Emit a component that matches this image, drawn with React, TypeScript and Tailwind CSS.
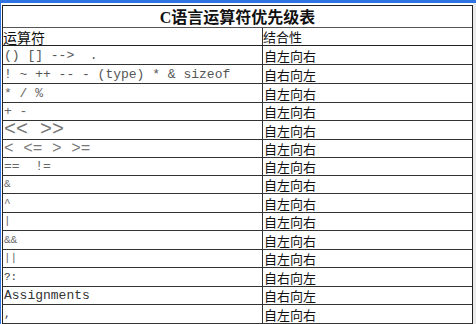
import React from "react";

const mono = { fontFamily: '"Liberation Mono", "Courier New", monospace' };

type Row = { op: string; cls: string; assoc: string; h: string };

const rows: Row[] = [
  { op: "() []\u00a0-->\u00a0\u00a0.", cls: "text-[13px] text-[#555]", assoc: "自左向右", h: "h-[19px]" },
  { op: "! ~ ++ -- - (type) * & sizeof", cls: "text-[13px] text-[#555]", assoc: "自右向左", h: "h-[19px]" },
  { op: "* / %", cls: "text-[13px] text-[#666]", assoc: "自左向右", h: "h-[19px]" },
  { op: "+ -", cls: "text-[13px] text-[#666]", assoc: "自左向右", h: "h-[18px]" },
  { op: "<< >>", cls: "text-[20px] text-[#777]", assoc: "自左向右", h: "h-[19px]" },
  { op: "< <= > >=", cls: "text-[16px] text-[#777]", assoc: "自左向右", h: "h-[18px]" },
  { op: "==\u00a0\u00a0!=", cls: "text-[13px] text-[#666]", assoc: "自左向右", h: "h-[18px]" },
  { op: "&", cls: "text-[11px] text-[#666]", assoc: "自左向右", h: "h-[18px]" },
  { op: "^", cls: "text-[11px] text-[#666]", assoc: "自左向右", h: "h-[19px]" },
  { op: "|", cls: "text-[11px] text-[#666]", assoc: "自左向右", h: "h-[18px]" },
  { op: "&&", cls: "text-[11px] text-[#666]", assoc: "自左向右", h: "h-[19px]" },
  { op: "||", cls: "text-[11px] text-[#666]", assoc: "自左向右", h: "h-[18px]" },
  { op: "?:", cls: "text-[11px] text-[#333]", assoc: "自右向左", h: "h-[19px]" },
  { op: "Assignments", cls: "text-[13px] text-[#333]", assoc: "自右向左", h: "h-[18px]" },
  { op: ",", cls: "text-[11px] text-[#333]", assoc: "自左向右", h: "h-[19px]" },
];

const cjk = { fontFamily: '"Noto Sans CJK SC", "Liberation Sans", sans-serif' };

export default function App() {
  return (
    <div className="w-[476px] h-[324px] overflow-hidden bg-white flex flex-col">
      <div className="h-[3px] bg-[#2f74e0] shrink-0" />
      <div className="flex flex-1 min-h-0">
        <div className="w-[1px] bg-[#2f74e0] shrink-0" />
        <div className="w-[1px] bg-white shrink-0" />
        <div className="flex flex-col w-[471px] shrink-0">
          <div className="h-[2px] bg-white shrink-0" />
          <div className="border-l border-r border-t border-[#222] flex flex-col flex-1">
            <div className="h-[22px] border-b border-[#555] flex items-center justify-center shrink-0">
              <span className="text-[16px] font-bold text-[#111] leading-none" style={{ fontFamily: '"Liberation Serif", "Noto Sans CJK SC", serif' }}>
                C<span style={cjk}>语言运算符优先级表</span>
              </span>
            </div>
            <div className="h-[18px] border-b border-[#222] flex shrink-0">
              <div className="w-[259px] flex items-center text-[14px] text-[#111] leading-none" style={cjk}>运算符</div>
              <div className="flex-1 border-l border-[#333] flex items-center text-[13px] text-[#111] leading-none" style={cjk}>结合性</div>
            </div>
            {rows.map((r, i) => (
              <div key={i} className={`${r.h} border-b border-[#333] flex shrink-0`}>
                <div className={`w-[259px] flex items-center pl-[1px] leading-none whitespace-pre ${r.cls}`} style={mono}>
                  {r.op}
                </div>
                <div className="flex-1 border-l border-[#333] flex items-center pl-[1px] text-[13px] text-[#111] leading-none" style={cjk}>
                  {r.assoc}
                </div>
              </div>
            ))}
          </div>
        </div>
        <div className="flex-1 bg-[#ececec]" />
      </div>
    </div>
  );
}
